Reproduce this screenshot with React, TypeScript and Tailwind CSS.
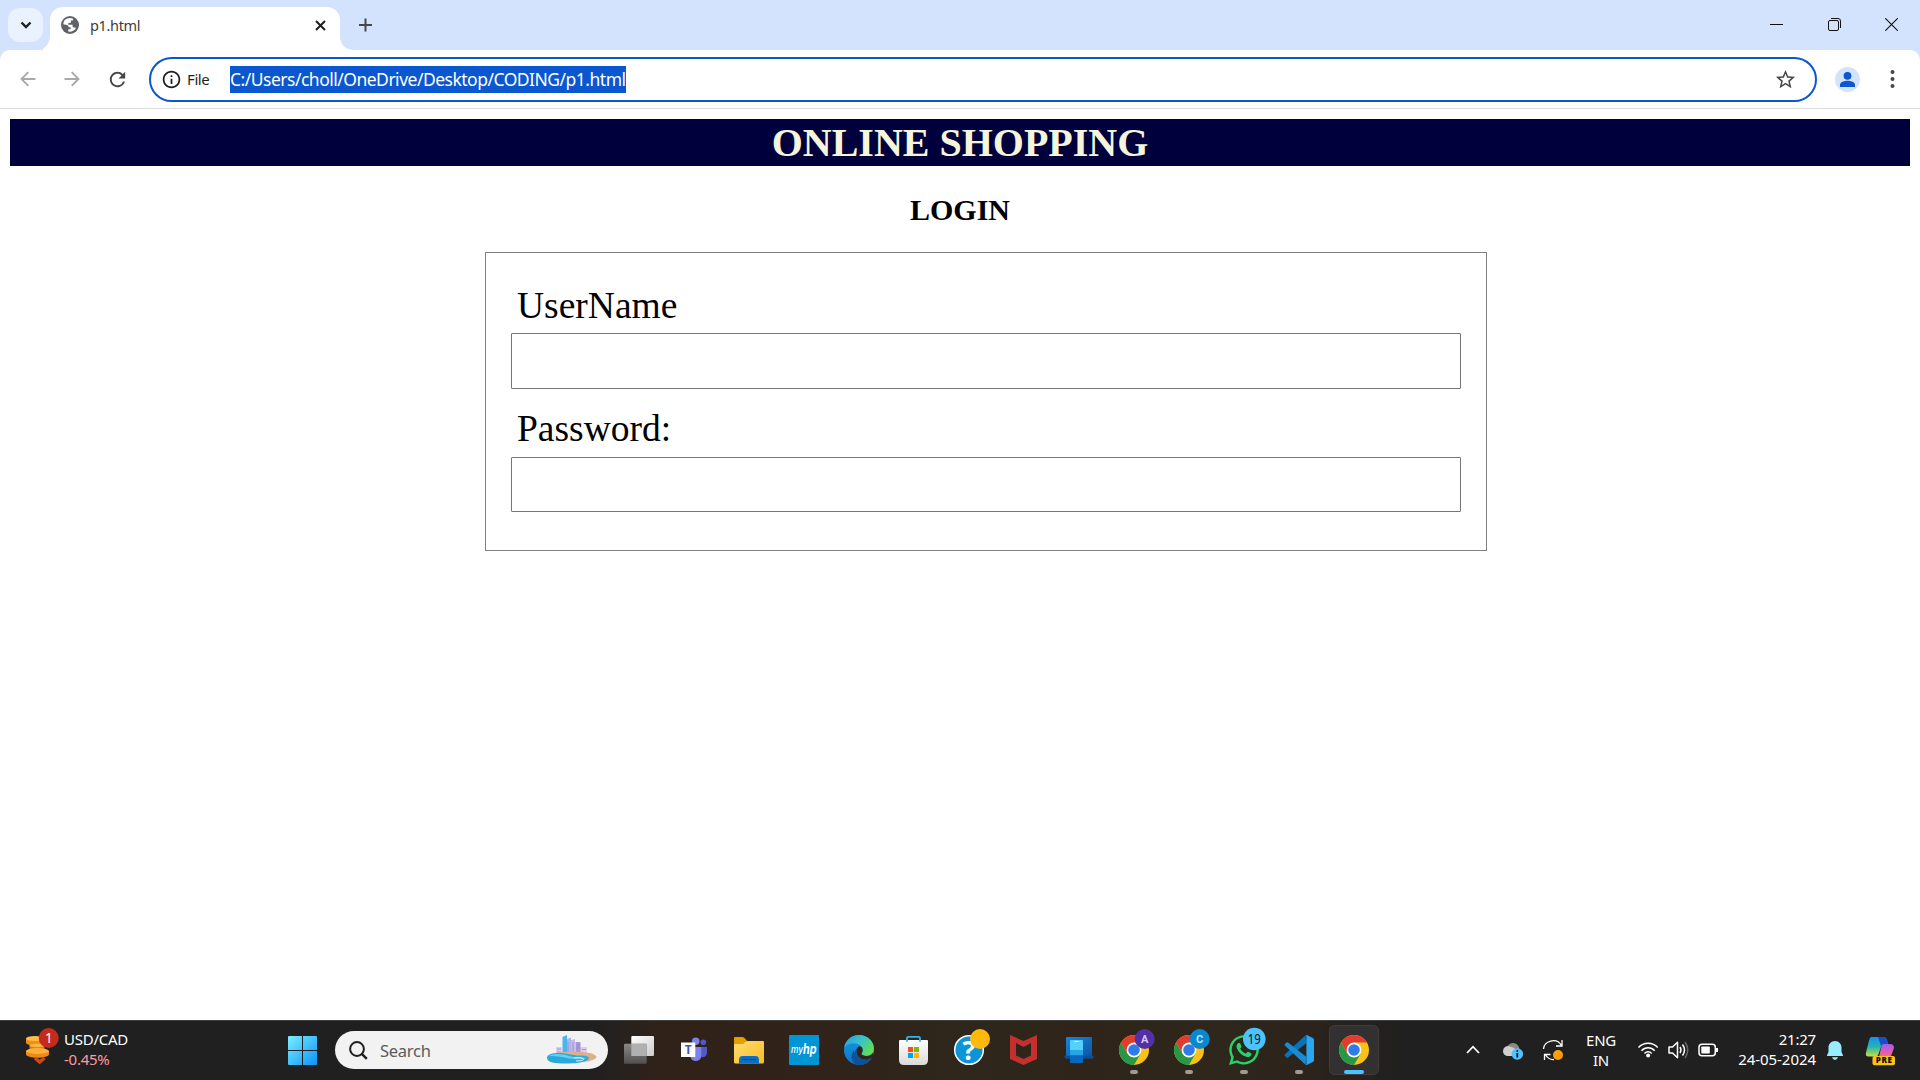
import type { ReactNode } from "react";
import { MdRefresh, MdStarBorder, MdInfoOutline } from "react-icons/md";
import { FaWhatsapp } from "react-icons/fa";

const ui = "font-['Noto_Sans','Open_Sans',sans-serif]";

function TabStrip() {
  return (
    <div className="flex h-[50px] w-full bg-[#d3e3fd]">
      <div className="ml-2 mt-2 flex h-[34px] w-[35px] items-center justify-center rounded-[12px] bg-[#ebf2ff]">
        <svg width="12" height="8" viewBox="0 0 12 8" fill="none" stroke="#1f1f1f" strokeWidth="2.4">
          <path d="M1.5 1.5 6 6l4.500-4.500" />
        </svg>
      </div>
      <svg className="mt-[35px] shrink-0" width="15" height="15" viewBox="0 0 15 15">
        <path d="M-8 15Q7 15 7 0H15V15Z" fill="#fff" />
      </svg>
      <div className="-ml-[8px] mt-[7px] flex h-[43px] w-[290px] shrink-0 items-center rounded-t-[13px] bg-white pb-[7px] pl-[11px]">
        <Globe />
        <span className="ml-[11px] text-[14.5px] leading-5 tracking-[-0.35px] text-[#3c3c3c]">p1.html</span>
        <svg className="ml-auto mr-[14.500px]" width="11" height="11" viewBox="0 0 11 11" stroke="#1f1f1f" strokeWidth="2">
          <path d="M1 1l9 9M10 1l-9 9" />
        </svg>
      </div>
      <svg className="mt-[35px] shrink-0" width="15" height="15" viewBox="0 0 15 15">
        <path d="M0 0Q0 15 15 15H0Z" fill="#fff" />
      </svg>
      <svg className="ml-[4px] mt-[18px]" width="13" height="14" viewBox="0 0 13 14" stroke="#474747" strokeWidth="2">
        <path d="M6.500 .5v13M0 7h13" />
      </svg>
      <div className="ml-auto mr-[22px] flex gap-[44.500px] pt-[18px]">
        <svg width="13" height="13" viewBox="0 0 13 13" stroke="#111">
          <path d="M0 6.500h13" />
        </svg>
        <svg width="13" height="13" viewBox="0 0 13 13" fill="none" stroke="#111">
          <rect x=".5" y="2.500" width="10" height="10" rx="1.500" />
          <path d="M3 .5h7q2.500 0 2.500 2.500v7" />
        </svg>
        <svg width="13" height="13" viewBox="0 0 13 13" stroke="#111" strokeWidth="1.100">
          <path d="M.3 .3l12.400 12.400M12.700 .3L.3 12.700" />
        </svg>
      </div>
    </div>
  );
}

function Globe() {
  return (
    <svg width="18" height="18" viewBox="0 0 18 18">
      <circle cx="9" cy="9" r="9" fill="#5f6368" />
      <path
        d="M8.300 2.100C5.500 2.300 3.400 4 2.600 6.200L2.300 8.200 6 9.100c1.200.2 1.600 1 1.600 2.200h2v2H7.300v2.300c3 .7 6-.9 7.600-3.400-.6-.6-1.200-.7-2.100-.7-.8 0-1.200-.6-1.200-1.400V8.800H7.300V6.900h1.600c.8 0 1-.4 1-1.200V4.600h1.200c.9 0 1.100-.6 1.200-1.500-1.200-.7-2.500-1.100-4-1Z"
        fill="#fff"
      />
    </svg>
  );
}

function Arrow({ flip }: { flip?: boolean }) {
  return (
    <svg className={flip ? "-scale-x-100" : ""} width="16" height="16" viewBox="0 0 16 16" fill="none" stroke="#a9a9a9" strokeWidth="1.900">
      <path d="M15.500 8H2M8.300 1.200L1.500 8l6.800 6.800" />
    </svg>
  );
}

function Toolbar() {
  return (
    <div className="bg-[#d3e3fd]">
      <div className="flex h-[59px] items-center rounded-t-[10px] border-b border-[#dedede] bg-white pl-5">
        <Arrow />
        <div className="ml-[28px] flex">
          <Arrow flip />
        </div>
        <MdRefresh className="ml-[26px]" size={23} color="#474747" />
        <div className="ml-[20px] flex h-[45px] w-[1667.500px] items-center rounded-full border-[2.500px] border-[#0b57d0] pl-[10px] pr-[18px]">
          <MdInfoOutline size={21} color="#1f1f1f" />
          <span className="ml-[5px] w-[43px] text-[15px] leading-5 tracking-[-0.4px] text-[#1f1f1f]">File</span>
          <span className="h-[27px] w-[396px] overflow-hidden whitespace-nowrap bg-[#0b57d0] text-[17.500px] leading-[27px] tracking-[-0.5px] text-white">
            C:/Users/choll/OneDrive/Desktop/CODING/p1.html
          </span>
          <MdStarBorder className="ml-auto" size={23} color="#474747" />
        </div>
        <svg className="ml-[18.500px]" width="25" height="25" viewBox="0 0 25 25">
          <circle cx="12.500" cy="12.500" r="12.500" fill="#d3e3fd" />
          <circle cx="12.500" cy="8.800" r="3.900" fill="#0b57d0" />
          <path d="M5 20v-2.300c0-2.600 4.500-3.900 7.500-3.900s7.500 1.300 7.500 3.900V20Z" fill="#0b57d0" />
        </svg>
        <svg className="ml-[30px]" width="5" height="20" viewBox="0 0 5 20" fill="#474747">
          <circle cx="2.500" cy="3" r="2" />
          <circle cx="2.500" cy="10" r="2" />
          <circle cx="2.500" cy="17" r="2" />
        </svg>
      </div>
    </div>
  );
}

function LoginPage() {
  return (
    <main className="flex-1 bg-white px-[10px] pt-[10px] font-['Liberation_Serif','Times_New_Roman',serif] text-black">
      <h1 className="h-[47px] bg-[#00003c] text-center text-[40px] font-bold leading-[47px] text-[#f5f5dc]">ONLINE SHOPPING</h1>
      <h2 className="mt-[27px] h-[34px] text-center text-[30px] font-bold leading-[34px]">LOGIN</h2>
      <form className="ml-[475px] mt-[25px] flex h-[299px] w-[1002px] flex-col border border-[#808080] px-[25px]">
        <label htmlFor="user" className="mt-[31px] pl-[6px] text-[37.500px] leading-[43px]">UserName</label>
        <input id="user" className="mt-[6px] h-[56px] w-[950px] shrink-0 rounded-[1px] border border-[#767676] bg-white outline-none" />
        <label htmlFor="pass" className="mt-[18px] pl-[6px] text-[37.500px] leading-[43px]">Password:</label>
        <input id="pass" type="password" className="mt-[7px] h-[55px] w-[950px] shrink-0 rounded-[1px] border border-[#767676] bg-white outline-none" />
      </form>
    </main>
  );
}

function Cell({ children, running }: { children: ReactNode; running?: boolean }) {
  return (
    <svg width="55" height="60" viewBox="0 0 55 60" className="shrink-0">
      {children}
      {running && <rect x="23" y="50" width="8" height="4" rx="2" fill="#a09a94" />}
    </svg>
  );
}

function Chrome() {
  return (
    <g>
      <circle cx="27" cy="30" r="15" fill="#fbc116" />
      <path d="M14 22.500A15 15 0 0 0 27 45L33.500 33.750 27 30 20.500 33.750Z" fill="#279847" />
      <path d="M27 30L14 22.500A15 15 0 0 1 40 22.500L27 22.500Z" fill="#e33b2e" />
      <path d="M14 22.500h13v8l-6.500 3.250Z" fill="#e33b2e" />
      <circle cx="27" cy="30" r="7.400" fill="#fff" />
      <circle cx="27" cy="30" r="5.800" fill="#2f7bea" />
    </g>
  );
}

function Badge({ letter, fill, color }: { letter: string; fill: string; color: string }) {
  return (
    <g>
      <circle cx="37.700" cy="19" r="10" fill={fill} />
      <text x="37.700" y="23" textAnchor="middle" fontSize="11" fontWeight="700" fontFamily="Roboto, sans-serif" fill={color}>{letter}</text>
    </g>
  );
}

function Apps() {
  return (
    <>
      <Cell>
        <defs>
          <linearGradient id="gWhite" x2="1" y2="1"><stop stopColor="#fff" /><stop offset="1" stopColor="#ccc" /></linearGradient>
          <linearGradient id="gGrey" x2="0" y2="1"><stop stopColor="#8a8885" /><stop offset="1" stopColor="#505050" /></linearGradient>
          <linearGradient id="gFolder" x2="1" y2="1"><stop stopColor="#ffdc70" /><stop offset="1" stopColor="#f9bd22" /></linearGradient>
          <linearGradient id="gEdgeTop" x2="1" y2=".6"><stop stopColor="#259fe0" /><stop offset=".5" stopColor="#35c1d0" /><stop offset="1" stopColor="#62dc55" /></linearGradient>
          <linearGradient id="gEdge" x2="0" y2="1"><stop stopColor="#1b95dd" /><stop offset="1" stopColor="#0877ce" /></linearGradient>
          <linearGradient id="gStore" x2="0" y2="1"><stop stopColor="#fff" /><stop offset="1" stopColor="#dadada" /></linearGradient>
          <linearGradient id="gLap" x2="1" y2="1"><stop stopColor="#1a83d8" /><stop offset="1" stopColor="#0a56a6" /></linearGradient>
        </defs>
        <rect x="19.300" y="16" width="22.700" height="20" rx="1" fill="url(#gWhite)" />
        <rect x="12" y="23.700" width="22.700" height="20" rx="1" fill="url(#gGrey)" />
        <path d="M19.300 23.700h15.400V36H19.300Z" fill="#b0b0b0" />
      </Cell>
      <Cell>
        <circle cx="36.300" cy="22.300" r="2.800" fill="#5059c9" />
        <path d="M33 27h7v5.500a4.500 4.500 0 0 1-7 4Z" fill="#5059c9" />
        <circle cx="28.700" cy="21.200" r="3.800" fill="#7b83eb" />
        <path d="M23.300 27h11v8.500a5.500 5.500 0 0 1-11 0Z" fill="#7b83eb" />
        <path d="M14 22.500h14.300V37H14Z" fill="#fff" />
        <text x="21.300" y="34" textAnchor="middle" fontSize="12" fontWeight="700" fontFamily="Open Sans, sans-serif" fill="#4b53bc">T</text>
      </Cell>
      <Cell>
        <path d="M12 18q0-1 1-1h7.500q1.500 0 2.500 1.500l2 2.500v4H12Z" fill="#e0a100" />
        <path d="M12 24h8q1.500 0 3-1.500 1.200-1.500 2.500-1.500H41q1 0 1 1v20q0 1.500-1.500 1.500h-27Q12 43.500 12 42Z" fill="url(#gFolder)" />
        <path d="M17 43.500V40q0-4 3.500-4h13q3.500 0 3.500 4v3.500Z" fill="#0c6fc4" />
        <path d="M20 39.500h14" stroke="#064f94" strokeWidth="1.200" />
      </Cell>
      <Cell>
        <rect x="12" y="15" width="30" height="30" rx="1" fill="#0096d6" />
        <text x="14" y="33" fontSize="9.500" fontStyle="italic" fontWeight="500" fontFamily="Inter, sans-serif" fill="#fff" textLength="12" lengthAdjust="spacingAndGlyphs">my</text>
        <text x="26" y="33.500" fontSize="14.500" fontStyle="italic" fontWeight="700" fontFamily="Inter, sans-serif" fill="#fff" textLength="13.500" lengthAdjust="spacingAndGlyphs">hp</text>
      </Cell>
      <Cell>
        <circle cx="27" cy="30" r="15" fill="url(#gEdge)" />
        <path d="M22 34c1 5 6 7.500 10.500 7 3-.3 5.500-1.500 7.200-2.800A15 15 0 0 1 27 45c-7 0-10-8.500-5-15Z" fill="#0f5299" />
        <path d="M12.200 27.500C13.500 20 19.500 15 27 15c9 0 15 6.700 15 13.500 0 4.500-3.200 7.500-7.300 7.500-3.200 0-5.200-1-5.200-2.200 0-.8 1.200-1.200 1.200-3.500 0-3.600-3.700-7.100-8.700-7.100-4.600 0-8 2-9.800 4.300Z" fill="url(#gEdgeTop)" />
        <path d="M25.500 27.500c2.500-2.700 5.200-.3 5.200 2.500 0 2.500-1.200 2.800-1.200 3.800 0 1.200 2 2.200 5.200 2.200 2.500 0 4.800-1.200 6-3l1.500 4-2.500 2C35 41 28 40 25.500 35.500c-1.500-2.800-1.700-6 0-8Z" fill="#30251b" />
        <path d="M25.200 28c-1.700 3-1 6.500 1 8.700 3 3.300 9 3.500 12.300 1.200.7-.4 1.600 0 .9.900A15 15 0 0 1 27 45c-6.500-1-8-10-1.800-17Z" fill="#0f5299" />
      </Cell>
      <Cell>
        <path d="M20 22v-4q0-1.200 1.200-1.200h10.600q1.200 0 1.200 1.200v4" fill="none" stroke="#2fb4e8" strokeWidth="1.800" />
        <path d="M12 21q0-1 1-1h27q1 0 1 1v19q0 5-5 5H17q-5 0-5-5Z" fill="url(#gStore)" />
        <path d="M20 19.500v2.200M33 19.500v2.200" stroke="#2fb4e8" strokeWidth="1.800" />
        <path d="M21 27h5v5h-5Z" fill="#f25022" />
        <path d="M27 27h5v5h-5Z" fill="#7fba00" />
        <path d="M21 33h5v5h-5Z" fill="#00a4ef" />
        <path d="M27 33h5v5h-5Z" fill="#ffb900" />
      </Cell>
      <Cell>
        <circle cx="27" cy="30" r="14.300" fill="#0a96d6" stroke="#fff" strokeWidth="1.500" />
        <text x="27" y="39.500" textAnchor="middle" fontSize="27" fontWeight="700" fontFamily="Open Sans, sans-serif" fill="#fff">?</text>
        <circle cx="38" cy="19" r="10" fill="#ffb90c" />
      </Cell>
      <Cell>
        <path d="M13 15l13.500 6L40 15v24l-13.500 6L13 39Zm6 8v12.500l7.500 3.500 7.500-3.500V23l-7.500 4Z" fill="#c4302f" fillRule="evenodd" />
      </Cell>
      <Cell>
        <rect x="14" y="17" width="26" height="20" rx="1" fill="url(#gLap)" />
        <path d="M12 35.700h30l-1.200 3H13.200Z" fill="#0e4e8f" />
        <path d="M18 21q0-1 1-1h11q1 0 1 1v9H18Z" fill="#55d0f8" />
        <path d="M18 30h13v5.500H18Z" fill="#25a5e5" />
        <path d="M18 35.500h13V42q0 1-1 1H19q-1 0-1-1Z" fill="#0668c0" />
        <path d="M22.500 21.500h4" stroke="#fff" />
      </Cell>
      <Cell running><Chrome /><Badge letter="A" fill="#5130a8" color="#d6c7f5" /></Cell>
      <Cell running><Chrome /><Badge letter="C" fill="#0788d1" color="#bce4fb" /></Cell>
      <Cell running>
        <FaWhatsapp x="10" y="13" size={34} color="#25d366" />
        <circle cx="37.300" cy="19" r="11.300" fill="#4cc2ff" />
        <text x="37.300" y="23.800" textAnchor="middle" fontSize="13.500" textLength="13" lengthAdjust="spacingAndGlyphs" fontFamily="Noto Sans, sans-serif" fill="#111">19</text>
      </Cell>
      <Cell running>
        <path d="M33.500 15.300L13 34.200q-1 .9 0 1.900l1.400 1.300q.8.700 1.700 0L34.500 23Z" fill="#0873b8" />
        <path d="M33.500 44.700L13 25.800q-1-.9 0-1.900l1.400-1.300q.8-.7 1.700 0L34.500 37Z" fill="#178bd4" />
        <path d="M33.500 15.200q.6-.4 1.300-.1l6 2.800q1.200.6 1.200 1.900v20.400q0 1.300-1.200 1.900l-6 2.800q-.7.300-1.300-.1.900.2 .9-1.300V16.500q0-1.500-.9-1.300Z" fill="#29a6f2" />
      </Cell>
      <Cell>
        <rect x="2.500" y="5.500" width="49" height="49" rx="5" fill="#323030" stroke="#403d3b" />
        <Chrome />
        <rect x="17" y="50" width="20" height="4" rx="2" fill="#4cc2ff" />
      </Cell>
    </>
  );
}

function Widget() {
  return (
    <div className="flex w-[288px] pl-[25px]">
      <svg width="36" height="60" viewBox="0 0 36 60">
        <path d="M1 18.500v4c0 4 18 4 18 0v-4Z" fill="#f08f16" />
        <path d="M4.500 24.500v5c0 3 15 3 15 0v-5Z" fill="#d97a0e" />
        <ellipse cx="12" cy="25.500" rx="7.500" ry="1.800" fill="#ffb440" />
        <path d="M1 31v3c0 5 23 5 23 0v-3Z" fill="#ee8b14" />
        <ellipse cx="10" cy="18.500" rx="9" ry="2.500" fill="#ffbd4a" />
        <ellipse cx="12.500" cy="31" rx="11.500" ry="3" fill="#ffb03a" />
        <path d="M10 38l4.700 4 4.700-4" fill="none" stroke="#cf4a14" strokeWidth="3.600" />
        <circle cx="23.700" cy="18" r="10" fill="#c42b1c" />
        <text x="23.900" y="23" textAnchor="middle" fontSize="13.500" fontFamily="Noto Sans, sans-serif" fill="#fff">1</text>
      </svg>
      <div className="ml-[3px] pt-[9px] text-[15px] leading-5 text-white">
        <div className="tracking-[-0.25px]">USD/CAD</div>
        <div className="tracking-[-0.25px] text-[#ff99a4]">-0.45%</div>
      </div>
    </div>
  );
}

function SearchBox() {
  return (
    <div className="ml-[18px] mr-[4px] mt-[11px] flex h-[38px] w-[273px] items-center rounded-full bg-[#f2f2f2] pl-[14px]">
      <svg width="19" height="19" viewBox="0 0 19 19" fill="none" stroke="#1f1f22" strokeWidth="2">
        <circle cx="8" cy="8" r="6.900" />
        <path d="M12.800 12.800l5 5" strokeWidth="2.500" />
      </svg>
      <span className="ml-[12px] pt-[2px] text-[16.500px] leading-6 tracking-[-0.25px] text-[#5a5a5a]">Search</span>
      <svg className="ml-auto mr-[11px]" width="51" height="30" viewBox="0 0 51 30">
        <path d="M10 12h6v10h-6ZM34 12h7v8h-7Z" fill="#d9cdf0" />
        <path d="M16.500 2l4.500-2v20h-4.500Z" fill="#4cb4ee" />
        <path d="M21 4l4-1.500V20h-4Z" fill="#a9b7ea" />
        <path d="M25 5l4-1v15h-4Z" fill="#c9b6ea" />
        <path d="M29.500 7h5v12h-5Z" fill="#a696dc" />
        <path d="M11 14h4M11 17h4M22 7v10M27 7v10M30.500 10h3M30.500 13h3M36 14.500h4" stroke="#8f8bcc" strokeWidth=".8" />
        <ellipse cx="27" cy="22" rx="23.500" ry="5.500" fill="#deb08a" />
        <path d="M1 23c0-4 6-5 12-5 9 0 12 2.500 21 2.500 6 0 11 1 8 4C38 28 28 28.500 20 28.500 9 28.500 1 27.500 1 23Z" fill="#2ba9dc" />
        <path d="M3 21c6-3 14-2 20 0 6 1.800 12 1 18 2-6 2-15 1-20 0-6-1.500-12-2-18-2Z" fill="#63d2ee" />
        <path d="M28 23q6-1.500 9 .5t-7 2.500" stroke="#d9f5fb" fill="none" />
      </svg>
    </div>
  );
}

function Tray() {
  return (
    <div className="ml-auto flex h-[60px] pr-5 text-white">
      <svg width="120" height="60" viewBox="1460 0 120 60" fill="none" stroke="#fff">
        <path d="M1467 33l6-6.300 6 6.300" strokeWidth="1.800" />
        <g stroke="none">
          <circle cx="1513" cy="29.500" r="6.500" fill="#888" />
          <path d="M1503 31a5 5 0 0 1 8-4q3 0 5 3v6h-9q-4-1-4-5Z" fill="#cfcfcf" />
          <circle cx="1517.300" cy="34" r="5.800" fill="#4fc3ff" />
          <circle cx="1517.300" cy="31" r="1" fill="#111" />
          <path d="M1516.400 33h1.800v4.500h-1.800Z" fill="#111" />
        </g>
        <path d="M1543.500 29c0-8 13-12 18-3.500M1562 20v6h-6M1554 39.500c-3.500.3-6.500-1.500-8.500-4.500M1544.500 40v-5.500h6" strokeWidth="1.300" />
        <circle cx="1558" cy="35" r="5" fill="#ff9d0a" stroke="none" />
      </svg>
      <div className="w-[42px] pt-[10px] text-center text-[15px] leading-5 tracking-[-0.3px]">
        <div>ENG</div>
        <div>IN</div>
      </div>
      <svg width="98" height="60" viewBox="1622 0 98 60" fill="none" stroke="#fff" strokeWidth="1.500">
        <path d="M1638.500 27.500c5-5.800 14.200-5.800 19.200 0M1641.500 30.800c3.500-4 9.700-4 13.200 0M1644.500 33.500c2-2.300 5.200-2.300 7.200 0" />
        <circle cx="1648.100" cy="35.500" r="2" fill="#fff" stroke="none" />
        <path d="M1669 27h3.500l5-4.700v15.400l-5-4.700h-3.500Z" strokeLinejoin="round" />
        <path d="M1680 27q2 3 0 6M1682.500 24.500q4 5.500 0 11" />
        <path d="M1685 22q5.500 8 0 16" stroke="#666" />
        <rect x="1699" y="24.200" width="16.300" height="11.600" rx="3" />
        <rect x="1701.300" y="26.500" width="8.500" height="7" rx=".8" fill="#fff" stroke="none" />
        <path d="M1717 28v4" strokeWidth="2" />
      </svg>
      <div className="w-[96px] pt-[9px] text-right text-[15px] leading-5">
        <div className="tracking-[-0.2px]">21:27</div>
        <div className="tracking-[-0.05px]">24-05-2024</div>
      </div>
      <svg className="ml-[10px]" width="18" height="60" viewBox="0 0 18 60" fill="#99ebff">
        <path d="M9 21c-4 0-6.500 3-6.500 6.500V32L1 35.300q-.2.700.6.700h14.800q.8 0 .6-.7L15.500 32v-4.500C15.500 24 13 21 9 21ZM6 37.300h6q-.8 2.700-3 2.700t-3-2.700Z" />
      </svg>
      <svg className="ml-[21px] mr-[4px]" width="31" height="60" viewBox="1865 0 31 60">
        <defs>
          <linearGradient id="gCo1" x2="0" y2="1"><stop stopColor="#1c8cf0" /><stop offset=".5" stopColor="#23b5b0" /><stop offset="1" stopColor="#c9df3c" /></linearGradient>
          <linearGradient id="gCo2" x2="0" y2="1"><stop stopColor="#a45cf0" /><stop offset=".6" stopColor="#ee5fa0" /><stop offset="1" stopColor="#fb9a5c" /></linearGradient>
        </defs>
        <path d="M1882 24h8q4 0 4 4l-3 8q-1 5-6 5h-7Z" fill="url(#gCo2)" />
        <path d="M1871 17h12q3 0 4 3l1 4h-4q-2 0-3 3l-2.500 7q-.8 2.500-3 2.500h-7q-3.500 0-2.500-4l3-12q1-3.500 2-3.500Z" fill="url(#gCo1)" />
        <path d="M1878 17h5q3 0 4 3l1 4h-4q-2 0-3 2Z" fill="#1650c8" />
        <rect x="1872.500" y="36" width="22.500" height="9.300" rx="2" fill="#fcc411" />
        <text x="1883.800" y="43.400" textAnchor="middle" fontSize="8" fontWeight="800" fontFamily="Open Sans, sans-serif" fill="#111" textLength="16">PRE</text>
      </svg>
    </div>
  );
}

function Taskbar() {
  return (
    <footer className="flex h-[60px] shrink-0 bg-[linear-gradient(90deg,#202020_0,#202020_590px,#302219_660px,#30231a_850px,#2e271b_960px,#2f2419_1080px,#2e271b_1220px,#2c231c_1310px,#202020_1400px)] shadow-[inset_0_1px_0_#3d4040]">
      <Widget />
      <svg className="mt-[16px]" width="29" height="29" viewBox="0 0 29 29">
        <defs>
          <linearGradient id="gWin" gradientUnits="userSpaceOnUse" x1="0" y1="0" x2="29" y2="29"><stop stopColor="#79efff" /><stop offset="1" stopColor="#0a93fb" /></linearGradient>
        </defs>
        <path d="M1 0h13v14H0V1q0-1 1-1ZM15 0h13q1 0 1 1v13H15ZM0 15h14v14H1q-1 0-1-1ZM15 15h14v13q0 1-1 1H15Z" fill="url(#gWin)" />
      </svg>
      <SearchBox />
      <Apps />
      <Tray />
    </footer>
  );
}

export default function App() {
  return (
    <div className={`flex h-[1080px] w-[1920px] flex-col overflow-hidden bg-white ${ui}`}>
      <TabStrip />
      <Toolbar />
      <LoginPage />
      <Taskbar />
    </div>
  );
}
